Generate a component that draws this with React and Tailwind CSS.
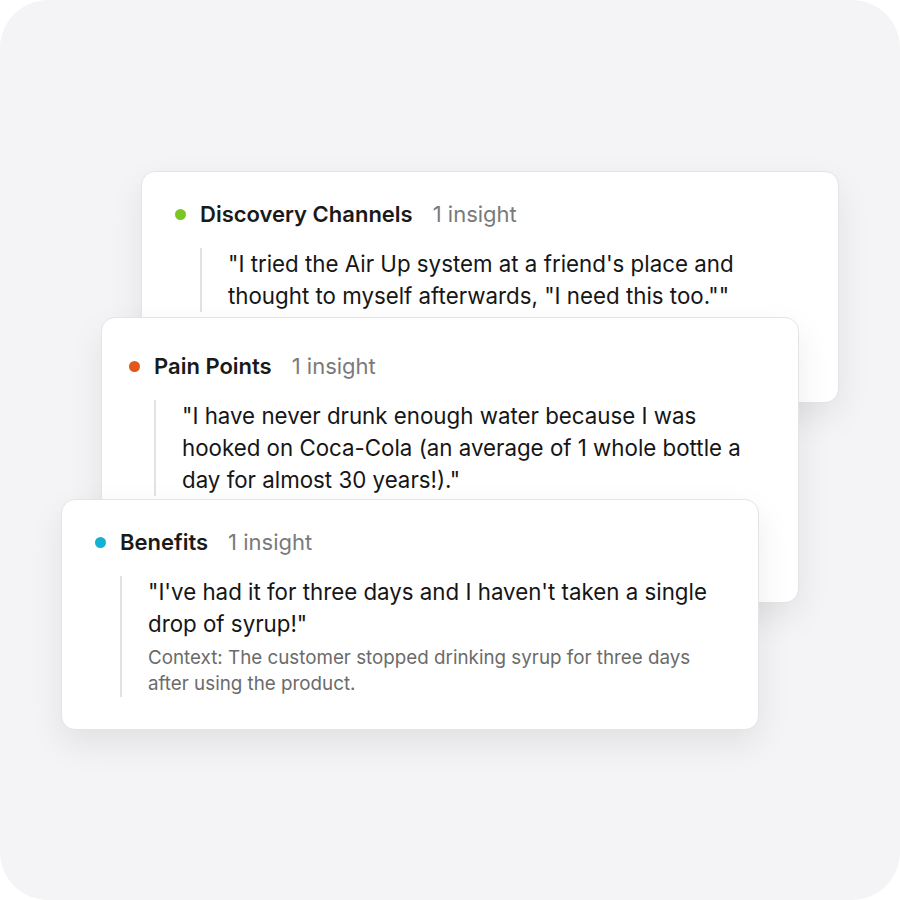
import React from 'react';

const cards = [
  {
    title: 'Discovery Channels',
    dot: 'bg-[#7cc623]',
    quote: '"I tried the Air Up system at a friend\'s place and thought to myself afterwards, "I need this too.""',
    box: 'ml-[141px] h-[232px] pt-[28px] pl-[33px]',
  },
  {
    title: 'Pain Points',
    dot: 'bg-[#e2571a]',
    quote: '"I have never drunk enough water because I was hooked on Coca-Cola (an average of 1 whole bottle a day for almost 30 years!)."',
    box: 'ml-[101px] -mt-[86px] h-[286px] pt-[34px] pl-[27px]',
  },
  {
    title: 'Benefits',
    dot: 'bg-[#12b2d3]',
    quote: '"I\'ve had it for three days and I haven\'t taken a single drop of syrup!"',
    context: 'Context: The customer stopped drinking syrup for three days after using the product.',
    box: 'ml-[61px] -mt-[104px] h-[231px] pt-[28px] pl-[33px]',
  },
];

const InsightCard = ({ title, dot, quote, context, box }) => (
  <div
    className={`relative w-[698px] shrink-0 overflow-hidden rounded-[14px] border border-[#e4e4e7] bg-white pr-10 shadow-[0_14px_34px_rgba(0,0,0,0.08)] ${box}`}
  >
    <div className="flex items-center h-7">
      <span className={`w-[11px] h-[11px] rounded-full ${dot}`} />
      <span className="ml-[14px] text-[22px] leading-7 font-semibold text-[#1a1a1a]">{title}</span>
      <span className="ml-5 text-[22px] leading-7 text-[#7a7a7a]">1 insight</span>
    </div>
    <div className="ml-[25px] mt-5 border-l-2 border-[#e2e2e2] pl-[26px]">
      <p className="text-[22.3px] leading-8 text-[#161616]">{quote}</p>
      {context && (
        <p className="mt-[5px] text-[18.8px] leading-[26px] text-[#6b6b6b]">{context}</p>
      )}
    </div>
  </div>
);

export default function App() {
  return (
    <div className="w-[900px] h-[900px] bg-white" style={{ fontFamily: 'Inter, "Noto Sans", sans-serif' }}>
      <div className="w-full h-full rounded-[48px] bg-[#f4f4f6] pt-[171px] flex flex-col">
        {cards.map((c) => (
          <InsightCard key={c.title} {...c} />
        ))}
      </div>
    </div>
  );
}
